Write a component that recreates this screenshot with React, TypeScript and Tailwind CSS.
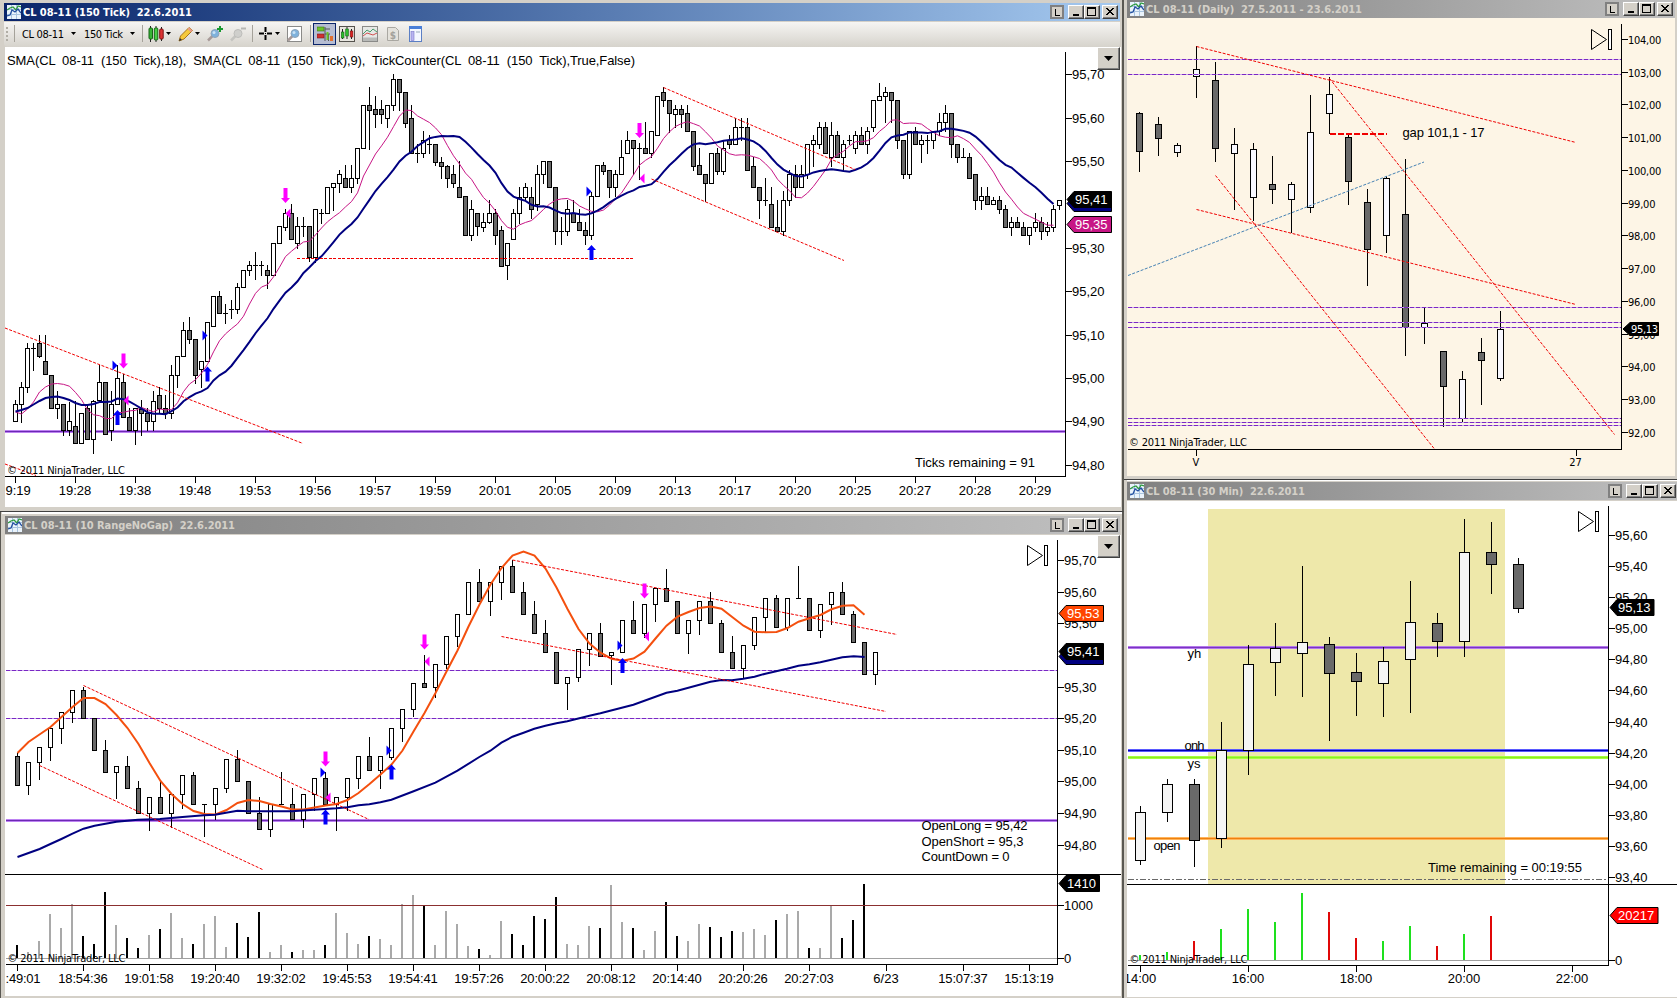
import type { ReactNode } from "react";

// [high, open, close, low] in chart pixels, y grows downwards
type Bar = [number, number, number, number];
type Line = [number, number, number, number];
type Dir = "up" | "down" | "left" | "right";
type Mark = [Dir, number, number];

const ARIAL = "'Liberation Sans', Arial, sans-serif";
const TAHOMA = "'DejaVu Sans Condensed', 'DejaVu Sans', Tahoma, sans-serif";
const DARK = "#696969";

const tickBars: Bar[] = [
  [400, 421, 404, 421], [382, 404, 387, 422], [343, 387, 348, 392], [343, 348, 348, 370], [335, 343, 356, 357],
  [335, 361, 374, 374], [375, 375, 408, 408], [391, 408, 404, 418], [404, 404, 430, 435], [402, 430, 421, 435],
  [401, 426, 443, 443], [413, 443, 413, 443], [405, 408, 439, 439], [400, 439, 401, 453], [365, 400, 382, 400],
  [382, 382, 434, 434], [391, 430, 404, 440], [365, 404, 378, 404], [374, 382, 417, 417], [408, 417, 430, 430],
  [408, 430, 408, 444], [400, 409, 413, 435], [408, 413, 421, 430], [391, 421, 401, 430], [387, 395, 408, 413],
  [395, 408, 413, 418], [365, 413, 375, 418], [356, 375, 356, 387], [322, 356, 330, 356], [317, 330, 339, 343],
  [339, 339, 375, 383], [361, 369, 361, 387], [322, 361, 322, 361], [296, 326, 296, 326], [291, 296, 313, 313],
  [304, 313, 313, 323], [300, 309, 309, 318], [283, 309, 287, 313], [270, 287, 270, 287], [261, 270, 265, 275],
  [252, 265, 265, 279], [261, 265, 265, 275], [265, 270, 275, 288], [243, 275, 243, 275], [226, 243, 226, 243],
  [209, 227, 213, 230], [204, 213, 239, 239], [217, 243, 226, 248], [217, 226, 226, 236], [226, 226, 257, 261],
  [209, 257, 209, 262], [209, 213, 213, 223], [187, 213, 187, 213], [183, 187, 183, 210], [170, 183, 174, 192],
  [165, 178, 187, 187], [165, 187, 178, 192], [148, 178, 148, 183], [105, 148, 105, 148], [87, 105, 110, 149],
  [96, 109, 114, 127], [100, 109, 114, 123], [105, 118, 105, 127], [74, 105, 79, 110], [79, 79, 92, 110],
  [92, 92, 123, 127], [105, 118, 153, 153], [144, 153, 153, 162], [131, 153, 140, 157], [135, 144, 144, 153],
  [144, 144, 162, 165], [157, 162, 166, 178], [165, 166, 178, 187], [165, 174, 183, 187], [161, 187, 197, 197],
  [196, 196, 235, 235], [200, 235, 209, 240], [213, 213, 226, 235], [213, 227, 222, 231], [200, 222, 213, 223],
  [209, 213, 235, 244], [226, 230, 266, 266], [243, 265, 243, 279], [209, 239, 213, 239], [187, 213, 197, 223],
  [183, 197, 187, 200], [187, 197, 209, 218], [165, 204, 174, 210], [161, 174, 161, 183], [161, 161, 187, 187],
  [187, 187, 231, 244], [217, 231, 231, 244], [200, 231, 209, 235], [200, 213, 222, 222], [209, 222, 230, 230],
  [222, 230, 235, 244], [192, 235, 196, 239], [165, 196, 165, 196], [162, 165, 171, 174], [170, 170, 187, 197],
  [170, 187, 174, 196], [140, 174, 157, 174], [131, 153, 140, 153], [140, 140, 148, 174], [143, 148, 148, 179],
  [122, 148, 153, 153], [131, 153, 131, 157], [96, 135, 96, 135], [87, 92, 100, 106], [100, 100, 113, 132],
  [105, 114, 109, 127], [105, 109, 114, 127], [105, 113, 131, 131], [131, 131, 166, 170], [148, 165, 174, 174],
  [174, 174, 183, 201], [153, 183, 153, 183], [148, 153, 171, 174], [140, 171, 148, 174], [135, 140, 144, 148],
  [118, 144, 127, 144], [118, 127, 127, 140], [118, 127, 170, 170], [157, 166, 187, 187], [187, 187, 200, 218],
  [178, 200, 200, 205], [187, 204, 227, 227], [200, 227, 231, 231], [191, 231, 200, 235], [170, 200, 174, 205],
  [165, 174, 187, 197], [165, 187, 174, 187], [144, 174, 144, 178], [135, 144, 140, 166], [122, 144, 127, 148],
  [122, 127, 153, 153], [122, 157, 135, 166], [131, 135, 157, 157], [140, 157, 144, 170], [135, 140, 140, 144],
  [131, 148, 135, 153], [127, 135, 144, 144], [127, 144, 131, 153], [100, 127, 100, 131], [83, 100, 96, 100],
  [87, 96, 92, 122], [92, 92, 100, 122], [100, 100, 140, 148], [140, 140, 174, 178], [131, 174, 131, 178],
  [127, 131, 144, 144], [135, 144, 140, 162], [135, 140, 140, 153], [131, 140, 131, 148], [113, 131, 122, 135],
  [105, 122, 113, 131], [113, 113, 144, 157], [144, 144, 157, 162], [148, 157, 157, 157], [153, 157, 178, 178],
  [174, 174, 200, 209], [187, 200, 196, 209], [187, 196, 204, 204], [197, 204, 200, 204], [196, 200, 209, 213],
  [205, 209, 227, 227], [217, 227, 222, 235], [217, 222, 227, 227], [222, 227, 235, 235], [227, 235, 227, 244],
  [213, 227, 222, 231], [217, 222, 231, 239], [222, 231, 227, 235], [205, 227, 209, 231], [200, 205, 200, 209],
];

const rangeBars: Bar[] = [
  [753, 756, 785, 785], [762, 785, 762, 794], [747, 762, 747, 779], [728, 747, 728, 760], [712, 728, 712, 743],
  [690, 712, 690, 722], [687, 690, 718, 718], [718, 718, 750, 750], [740, 750, 772, 772], [766, 772, 766, 798],
  [756, 766, 788, 788], [781, 788, 813, 813], [797, 813, 797, 830], [781, 797, 813, 813], [794, 813, 794, 827],
  [775, 794, 775, 808], [772, 775, 804, 804], [804, 804, 804, 836], [788, 804, 788, 819], [759, 788, 759, 792],
  [750, 759, 781, 781], [781, 781, 813, 813], [797, 813, 829, 829], [804, 829, 804, 836], [772, 804, 804, 804],
  [788, 804, 819, 819], [794, 819, 794, 827], [778, 794, 778, 810], [772, 778, 804, 804], [797, 804, 797, 830],
  [778, 797, 778, 810], [756, 778, 756, 788], [737, 756, 770, 770], [756, 770, 756, 788], [728, 757, 728, 759],
  [709, 728, 709, 741], [683, 709, 683, 716], [655, 683, 687, 687], [664, 687, 664, 697], [636, 664, 636, 668],
  [614, 636, 614, 646], [582, 614, 582, 614], [569, 582, 601, 601], [582, 601, 582, 615], [566, 582, 566, 599],
  [560, 566, 592, 592], [582, 592, 614, 614], [601, 614, 633, 633], [620, 633, 652, 652], [652, 652, 683, 683],
  [677, 683, 677, 709], [649, 677, 649, 681], [633, 649, 633, 665], [623, 633, 656, 656], [652, 655, 652, 684],
  [620, 652, 620, 652], [601, 620, 633, 633], [604, 633, 604, 637], [588, 604, 588, 621], [569, 588, 601, 601],
  [601, 601, 633, 633], [620, 633, 620, 653], [601, 620, 601, 634], [592, 601, 623, 623], [620, 623, 652, 652],
  [636, 652, 668, 668], [645, 668, 645, 678], [617, 645, 617, 649], [598, 617, 598, 631], [595, 598, 627, 627],
  [598, 627, 598, 630], [566, 598, 598, 598], [598, 598, 630, 630], [604, 630, 604, 637], [592, 604, 592, 624],
  [582, 592, 614, 614], [611, 614, 642, 642], [642, 642, 674, 674], [652, 674, 652, 684],
];

const dailyBars: Bar[] = [
  [112, 113, 151, 171], [117, 124, 138, 155], [143, 152, 145, 156], [46, 76, 69, 97], [62, 80, 148, 161],
  [128, 153, 144, 209], [143, 197, 149, 220], [156, 184, 189, 203], [182, 199, 184, 232], [95, 207, 132, 212],
  [77, 113, 94, 133], [135, 137, 181, 204], [189, 202, 249, 285], [176, 235, 178, 252], [159, 214, 327, 355],
  [307, 327, 323, 343], [351, 351, 386, 426], [371, 418, 379, 422], [338, 352, 360, 404], [311, 378, 329, 380],
];

const halfHourBars: Bar[] = [
  [806, 860, 812, 864], [779, 812, 784, 821], [779, 784, 840, 866], [722, 838, 750, 847], [645, 750, 664, 774],
  [623, 662, 648, 695], [566, 653, 642, 696], [637, 644, 673, 740], [653, 672, 681, 715], [647, 683, 661, 716],
  [581, 659, 622, 712], [613, 623, 641, 656], [519, 641, 552, 656], [522, 552, 564, 593], [558, 564, 608, 612],
];

const envelope = [
  753, 742, 734.5, 727, 717, 707, 698, 698, 704, 715, 728, 744, 763, 781, 794, 804, 811, 814, 814.5, 810, 803, 800,
  801, 804, 806.5, 809.5, 809.5, 807.5, 805.5, 804, 800, 793, 784, 774.5, 764.5, 750.5, 731.5, 713, 693, 671.5, 650.5,
  626.5, 604.5, 584.5, 568, 555.5, 551.5, 555.5, 568.5, 587.5, 609, 629, 643.5, 652.7, 658.7, 660.7, 658.5, 651.7,
  638.5, 625.7, 616.7, 612, 608, 606.5, 608.7, 617.3, 625.7, 631.7, 632.3, 632, 628, 621.7, 618.3, 615, 609.3, 605.7,
  605.3, 614.7,
];

const slowAverage =
  "17.5,857 39.6,849 50.4,844 61.4,839 72.5,833.7 83.6,828.7 94.6,825.7 116.4,821.7 138,819.7 160,819 182.5,817 204,815.3 215,814.7 226,812.7 237.5,810.7 248.5,811.3 292,811.3 314,809.7 336.4,808.3 347.5,807.3 358.5,805.3 369.3,804.3 380.4,802.3 391.4,799.7 413.6,791.3 435.4,782.7 457.5,770.7 479.3,757 490.4,750.7 501.4,742.7 512.5,736.7 523.6,732.7 534.3,728.7 545.4,725.7 556.4,723.3 567.3,721.3 589.4,715.7 600.4,713.3 633.4,704.7 666.5,692.7 677.4,690.7 710.5,681.7 721.4,680 732,680.3 743.2,678.7 754.5,676.7 765.4,673.7 787,668.7 798.5,665.7 809.4,664.3 820.3,662.3 842.4,657.3 853.7,656.3 864.6,657";

// negative = black bar, positive = grey bar
const volume = [
  -945, 952, 941, 914, 928, 904, -936, -944, -892, 925, -938, -948, 935, -929, 913, 938, -944, 924, 916, 947, -923,
  -937, -912, 952, 945, -952, 950, 950, -945, 913, 933, 944, -936, 939, 945, 904, 895, -905, 945, 911, 924, 946, -949,
  955, 921, -934, -945, -916, -919, -897, 944, 945, 926, -928, 885, 922, -928, 950, 931, -902, -936, 941, 924, -927,
  -937, -931, 932, 929, 935, -920, 914, 911, -948, 948, 905, -938, -920, -884,
];
const halfHourVolume = [955, 952, -941, 929, 909, 922, 893, -912, -938, 941, 926, -946, 934, -916];

const seed18 = [411.5, 410, 408, 404.5, 401, 398, 397, 396.5, 398, 400, 403, 405, 405, 404, 402, 402, 401.5];
const seed9 = [412, 414, 409, 402, 392, 387, 384, 383.5];

function sma(bars: Bar[], period: number, seed: number[]) {
  return bars.map((_, i) => {
    if (i < seed.length) return seed[i];
    let sum = 0;
    for (let k = i - period + 1; k <= i; k++) sum += bars[k][2];
    return sum / period;
  });
}

const toPoints = (ys: number[], x0: number, step: number) => ys.map((y, i) => `${x0 + i * step},${y}`).join(" ");

function Candles({ bars, x0, step, half, fill = "#fff" }: { bars: Bar[]; x0: number; step: number; half: number; fill?: string }) {
  return (
    <g shapeRendering="crispEdges" stroke="#000">
      {bars.map(([h, o, c, l], i) => {
        const x = x0 + i * step;
        const top = Math.min(o, c);
        const bottom = Math.max(o, c);
        return (
          <g key={i}>
            <line x1={x} x2={x} y1={h} y2={l + 1} />
            {o === c ? (
              <line x1={x - half - 0.5} x2={x + half + 0.5} y1={o + 0.5} y2={o + 0.5} />
            ) : (
              <rect x={x - half} y={top + 0.5} width={half * 2} height={bottom - top} fill={c > o ? DARK : fill} />
            )}
          </g>
        );
      })}
    </g>
  );
}

function Dashes({ lines, color = "#f00000", dash = "3 1.5", width = 1 }: { lines: Line[]; color?: string; dash?: string; width?: number }) {
  return (
    <g stroke={color} strokeDasharray={dash} strokeWidth={width}>
      {lines.map(([x1, y1, x2, y2], i) => (
        <line key={i} x1={x1} y1={y1} x2={x2} y2={y2} shapeRendering={y1 === y2 ? "crispEdges" : "auto"} />
      ))}
    </g>
  );
}

function Levels({ ys, x1, x2 }: { ys: number[]; x1: number; x2: number }) {
  return (
    <g shapeRendering="crispEdges">
      {ys.map((y) => (
        <g key={y}>
          <line x1={x1} x2={x2} y1={y} y2={y} stroke="#c9a4ee" />
          <line x1={x1} x2={x2} y1={y} y2={y} stroke="#7a28c4" strokeDasharray="4 2" />
        </g>
      ))}
    </g>
  );
}

function ThickLevel({ y, x1, x2, outer, inner }: { y: number; x1: number; x2: number; outer: string; inner: string }) {
  return (
    <g shapeRendering="crispEdges">
      <line x1={x1} x2={x2} y1={y} y2={y} stroke={outer} strokeWidth={3} />
      <line x1={x1} x2={x2} y1={y} y2={y} stroke={inner} />
    </g>
  );
}

// up/down arrows take their top edge as y, the small triangles their middle
function Marks({ marks }: { marks: Mark[] }) {
  return (
    <g>
      {marks.map(([dir, x, y], i) => {
        if (dir === "up") return <path key={i} fill="#0000f8" d={`M${x} ${y}l4.5 5h-2.5v10h-4v-10h-2.5z`} />;
        if (dir === "down") return <path key={i} fill="#ff00ff" d={`M${x} ${y + 15}l4.5-5h-2.5v-10h-4v10h-2.5z`} />;
        if (dir === "right") return <path key={i} fill="#0000f8" d={`M${x} ${y}l-5-5v10z`} />;
        return <path key={i} fill="#ff00ff" d={`M${x} ${y}l5-5v10z`} />;
      })}
    </g>
  );
}

function Label({ x, y, children, width, size = 13, font = ARIAL, anchor = "start", fill = "#000" }: {
  x: number; y: number; children: ReactNode; width?: number; size?: number; font?: string; anchor?: "start" | "middle"; fill?: string;
}) {
  return (
    <text x={x} y={y} fontSize={size} fontFamily={font} textAnchor={anchor} fill={fill} textLength={width} className="whitespace-pre">
      {children}
    </text>
  );
}

function PriceAxis({ x, ticks, font = ARIAL, size = 13 }: { x: number; ticks: [string, number][]; font?: string; size?: number }) {
  return (
    <g>
      {ticks.map(([label, y]) => (
        <g key={label}>
          <line x1={x} x2={x + 6} y1={y} y2={y} stroke="#000" shapeRendering="crispEdges" />
          <Label x={x + 6} y={y + (size > 12 ? 4.5 : 4)} font={font} size={size} width={font === TAHOMA ? label.length * 5.7 - 1 : undefined}>
            {label}
          </Label>
        </g>
      ))}
    </g>
  );
}

function TimeAxis({ y, baseline, ticks, font = ARIAL, size = 13, width }: {
  y: number; baseline: number; ticks: [string, number][]; font?: string; size?: number; width?: number;
}) {
  return (
    <g>
      {ticks.map(([label, x]) => (
        <g key={x}>
          <line x1={x} x2={x} y1={y} y2={y + 6} stroke="#000" shapeRendering="crispEdges" />
          {label && (
            <Label x={x - 0.5} y={baseline} anchor="middle" font={font} size={size} width={label.length > 5 ? width : undefined}>
              {label}
            </Label>
          )}
        </g>
      ))}
    </g>
  );
}

function Tag({ x, y, w, h = 16, fill, text, size = 13, font = ARIAL }: {
  x: number; y: number; w: number; h?: number; fill: string; text?: string; size?: number; font?: string;
}) {
  return (
    <g>
      <path d={`M${x} ${y + h / 2}l7-${h / 2}h${w - 7}v${h}h-${w - 7}z`} fill={fill} stroke="#000" />
      {text && (
        <Label x={x + 8} y={y + h / 2 + (size > 12 ? 4.5 : 4)} fill="#fff" size={size} font={font} width={size > 12 ? undefined : 27}>
          {text}
        </Label>
      )}
    </g>
  );
}

function SkipIcon({ x, y }: { x: number; y: number }) {
  return (
    <g fill="none" stroke="#000">
      <path d={`M${x} ${y}l15 10l-15 10z`} />
      <rect x={x + 17} y={y} width="3" height="20" fill="#fff" shapeRendering="crispEdges" />
    </g>
  );
}

function Copyright({ x, y }: { x: number; y: number }) {
  return (
    <Label x={x} y={y} size={11} font={TAHOMA} width={118}>
      © 2011 NinjaTrader, LLC
    </Label>
  );
}

function ChartIcon() {
  return (
    <svg width="14" height="14" viewBox="0 0 14 14" className="shrink-0">
      <rect width="14" height="14" fill="#eaf3fb" />
      <path d="M0 4.5h14M0 9.5h14M4.5 0v14M9.5 0v14" stroke="#a9c4e0" />
      <path d="M0 5l3-2 3-1 3 3 2-4 3 1" fill="none" stroke="#2c9a3c" strokeWidth="1.3" />
      <path d="M0 11l3-1 2-5 3 2 3-3 3 4" fill="none" stroke="#234fa0" strokeWidth="1.3" />
    </svg>
  );
}

function BevelButton({ children, className }: { children: ReactNode; className?: string }) {
  return (
    <div className={`box-border h-[14px] w-4 border border-t-white border-r-[#404040] border-b-[#404040] border-l-white bg-[#d4d0c8] shadow-[inset_-1px_-1px_0_#808080] ${className ?? ""}`}>
      <svg width="14" height="12" viewBox="0 0 14 12" shapeRendering="crispEdges">{children}</svg>
    </div>
  );
}

function TitleBar({ title, active, width, className }: { title: string; active?: boolean; width: number; className: string }) {
  return (
    <div className={`flex shrink-0 items-center ${active ? "bg-linear-to-r from-[#0a246a] to-[#a6caf0]" : "bg-linear-to-r from-[#808080] to-[#c0c0c0]"} ${className}`}>
      <ChartIcon />
      <svg width={width + 4} height="16" className="ml-[2px]">
        <text x="0" y="12" fontSize="11" fontWeight="bold" fontFamily={TAHOMA} textLength={width} fill={active ? "#fff" : "#d4d0c8"} className="whitespace-pre">
          {title}
        </text>
      </svg>
      <div className="ml-auto flex">
        <div className="mr-1 flex h-[14px] w-[14px] items-end justify-center border-2 border-[#808080] bg-[#d4d0c8]">
          <svg width="5" height="8" shapeRendering="crispEdges"><path d="M.5 0v6.5H5" stroke="#000" fill="none" /></svg>
        </div>
        <BevelButton><path d="M4 9h6" stroke="#000" strokeWidth="2" /></BevelButton>
        <BevelButton><path d="M2.500 1.500h8v8h-8zM2 2.500h9" stroke="#000" fill="none" /></BevelButton>
        <BevelButton className="ml-[2px]">
          <path d="M3 2l7 7M4 2l7 7M10 2l-7 7M11 2l-7 7" stroke="#000" shapeRendering="auto" />
        </BevelButton>
      </div>
    </div>
  );
}

function DropButton() {
  return (
    <div className="absolute top-0 right-px flex h-[23px] w-[23px] items-center justify-center border border-t-white border-r-[#404040] border-b-[#404040] border-l-white bg-[#d4d0c8] shadow-[inset_-1px_-1px_0_#808080]">
      <svg width="9" height="5"><path d="M0 0h9l-4.500 5z" /></svg>
    </div>
  );
}

function Caret({ className }: { className: string }) {
  return (
    <svg width="5" height="3" className={`shrink-0 ${className}`}><path d="M0 0h5l-2.500 3z" /></svg>
  );
}

function Separator({ className }: { className: string }) {
  return <div className={`h-[17px] w-px shrink-0 bg-[#a5a29a] ${className}`} />;
}

function Glyph({ children, className }: { children: ReactNode; className: string }) {
  return (
    <svg width="16" height="16" viewBox="0 0 16 16" className={`shrink-0 ${className}`}>{children}</svg>
  );
}

function ToolText({ text, width, className }: { text: string; width: number; className: string }) {
  return (
    <svg width={width + 1} height="16" className={`shrink-0 ${className}`}>
      <text x="0" y="12" fontSize="11" fontFamily={TAHOMA} textLength={width}>{text}</text>
    </svg>
  );
}

function Lens({ grey }: { grey?: boolean }) {
  return (
    <>
      <path d="M5.500 10L1 14.500" stroke={grey ? "#c4c4c0" : "#a89a98"} strokeWidth="2.500" />
      <circle cx="8" cy="7.500" r="4" fill={grey ? "#cfcfcc" : "#7fb2dc"} stroke={grey ? "#bdbdba" : "#8fa4b8"} />
      {!grey && <circle cx="7" cy="6.500" r="1.500" fill="#c9e2f5" />}
    </>
  );
}

function Toolbar() {
  return (
    <div className="flex h-[25px] shrink-0 items-center rounded-b-sm bg-linear-to-b from-[#f6f5f3] to-[#d6d3cc] pb-[2px]">
      <div className="ml-[2px] flex w-[2px] shrink-0 flex-col gap-[2px]">
        {[0, 1, 2, 3].map((i) => <div key={i} className="h-[2px] w-[2px] bg-[#b0ada5]" />)}
      </div>
      <Separator className="ml-[6px]" />
      <ToolText text="CL 08-11" width={42} className="ml-[7px]" />
      <Caret className="ml-[6px]" />
      <ToolText text="150 Tick" width={39} className="ml-[8px]" />
      <Caret className="ml-[6px]" />
      <Separator className="ml-[7px]" />
      <Glyph className="ml-[5px]">
        <path d="M2.500 0v16M8 0v16M13.500 1v14" stroke="#222" />
        <rect x="1" y="2" width="3.500" height="11" rx="1" fill="#35b535" stroke="#176217" />
        <rect x="6.300" y="2" width="3.500" height="12" rx="1" fill="#45cf45" stroke="#176217" />
        <rect x="11.700" y="3" width="3.500" height="10" rx="1" fill="#d33" stroke="#7a1515" />
      </Glyph>
      <Caret className="ml-[2px]" />
      <Glyph className="ml-[7px]">
        <path d="M1 15l1.500-5L11 1.500l3.500 3L6 13z" fill="#f5c93c" stroke="#a8751c" />
        <path d="M9.500 3l3.500 3.300 1.500-1.800L11 1.500z" fill="#e89a8c" />
        <path d="M1 15l1-3 2 2z" fill="#333" />
      </Glyph>
      <Caret className="ml-[1px]" />
      <Glyph className="ml-[7px]">
        <Lens />
        <path d="M13 0v6M10 3h6" stroke="#189a30" strokeWidth="2" />
      </Glyph>
      <Glyph className="ml-[7px]">
        <Lens grey />
        <path d="M11 2.500h5" stroke="#b8b8b4" strokeWidth="2" />
      </Glyph>
      <Separator className="ml-[6px]" />
      <Glyph className="ml-[5px]">
        <path d="M7.500 1v5M7.500 9v5M1 7.500h5M9 7.500h5" stroke="#000" strokeWidth="2" />
        <rect x="7" y="7" width="1" height="1" />
      </Glyph>
      <Caret className="ml-[1px]" />
      <Glyph className="ml-[7px]">
        <rect x=".5" y=".5" width="14" height="15" fill="#fff" stroke="#8a8a88" />
        <Lens />
      </Glyph>
      <Separator className="ml-[7px]" />
      <div className="ml-[2px] flex h-[22px] w-[23px] shrink-0 items-center justify-center border border-[#0a246a] bg-[#b6bdd2]">
        <Glyph className="">
          <path d="M8 1v14M8 3h5M8 8h5M11.500 8v7" stroke="#555" fill="none" />
          <rect x="0" y="1" width="7" height="4" fill="#6bc42a" stroke="#3f7a14" strokeWidth=".6" />
          <rect x="0" y="8" width="7" height="4" fill="#d03030" stroke="#801818" strokeWidth=".6" />
          <rect x="9.500" y="6" width="2" height="8" fill="#6bc42a" />
          <rect x="13" y="10" width="3" height="5" fill="#e07030" />
        </Glyph>
      </div>
      <Glyph className="ml-[3px]">
        <rect x=".5" y=".5" width="15" height="15" fill="#e8e6e0" stroke="#55534e" />
        <path d="M3.500 3v10M8 1v12M12.500 3v10" stroke="#222" />
        <rect x="2.300" y="6" width="2.700" height="6" fill="#2ebd2e" stroke="#176217" strokeWidth=".6" />
        <rect x="6.700" y="3" width="2.700" height="7" fill="#2ebd2e" stroke="#176217" strokeWidth=".6" />
        <rect x="11.200" y="5" width="2.700" height="6" fill="#d22" stroke="#7a1515" strokeWidth=".6" />
      </Glyph>
      <Glyph className="ml-[7px]">
        <rect x=".5" y=".5" width="15" height="15" fill="#e6e8e6" stroke="#8a8a88" />
        <path d="M1 8l4-4 3 2 3-3 4 3" fill="none" stroke="#4a9a6a" />
        <path d="M1 10l4-3 3 1 3 1 4-2" fill="none" stroke="#d05050" />
        <path d="M1 11.500h14v3.500H1z" fill="#b8bab8" />
      </Glyph>
      <Glyph className="ml-[7px]">
        <path d="M2.500 1.500h8l3 3v10h-11z" fill="#e4e2dc" stroke="#aaa8a2" />
        <text x="8" y="12.500" fontSize="10" fontWeight="bold" fill="#a3a19b" textAnchor="middle" fontFamily={TAHOMA}>$</text>
      </Glyph>
      <Glyph className="ml-[7px]">
        <rect x="1.500" y=".5" width="12" height="15" fill="#f4f7ff" stroke="#5b7fc4" />
        <rect x="1" y="0" width="13" height="3" fill="#4a7fd8" />
        <rect x="3" y="5.500" width="3" height="9" fill="#b9b4f0" stroke="#7a78c8" strokeWidth=".6" />
        <path d="M8 6h4" stroke="#9ab" />
      </Glyph>
    </div>
  );
}

function TickChart() {
  const times = "19:19 19:28 19:38 19:48 19:53 19:56 19:57 19:59 20:01 20:05 20:09 20:13 20:17 20:20 20:25 20:27 20:28 20:29"
    .split(" ")
    .map((t, i): [string, number] => [i === 0 ? "" : t, 15.5 + i * 60]);
  return (
    <svg width="1116" height="460" viewBox="5 47 1116 460" className="block">
      <ThickLevel y={431.5} x1={5} x2={1065} outer="#bd82f2" inner="#6c28b4" />
      <Candles bars={tickBars} x0={15.5} step={6} half={2} />
      <polyline points={toPoints(sma(tickBars, 9, seed9).slice(0, 174), 15.5, 6)} fill="none" stroke="#c71585" />
      <polyline points={toPoints(sma(tickBars, 18, seed18).slice(0, 174), 15.5, 6)} fill="none" stroke="#000080" strokeWidth="2" />
      <Dashes
        lines={[
          [5, 328, 303, 443.5], [5, 464, 36, 475.5], [297, 258.5, 633, 258.5], [663.5, 87.5, 855, 169.5], [651.5, 179, 844, 260.5],
        ]}
      />
      <Marks
        marks={[
          ["down", 285.5, 188], ["down", 123.5, 353.5], ["down", 639.5, 123], ["up", 207.5, 366.5], ["up", 117.5, 410],
          ["up", 591.5, 245], ["right", 207.5, 335.5], ["right", 117.5, 365.5], ["right", 591.5, 191.5],
          ["left", 123.5, 400.5], ["left", 285.5, 213.5], ["left", 639.5, 178.5],
        ]}
      />
      <path d="M1065.5 52v424.500M5 476.500h1061" stroke="#000" shapeRendering="crispEdges" />
      <PriceAxis
        x={1066}
        ticks={[
          ["95,70", 74.5], ["95,60", 118.5], ["95,50", 161.5], ["95,30", 248.5], ["95,20", 291.5], ["95,10", 335.5],
          ["95,00", 378.5], ["94,90", 421.5], ["94,80", 465.5],
        ]}
      />
      <Label x={5.5} y={495}>9:19</Label>
      <TimeAxis y={477} baseline={495} ticks={times} />
      <Tag x={1067} y={195.500} w={44.5} fill="#000080" />
      <Tag x={1067} y={191.500} w={44.5} fill="#000" text="95,41" />
      <Tag x={1067} y={216.500} w={44.5} fill="#c71585" text="95,35" />
      <Label x={7} y={65} width={628}>
        SMA(CL  08-11  (150  Tick),18),  SMA(CL  08-11  (150  Tick),9),  TickCounter(CL  08-11  (150  Tick),True,False)
      </Label>
      <Label x={915} y={467} width={120}>Ticks remaining = 91</Label>
      <Copyright x={7} y={474} />
    </svg>
  );
}

function RangeChart() {
  const times = "18:49:01 18:54:36 19:01:58 19:20:40 19:32:02 19:45:53 19:54:41 19:57:26 20:00:22 20:08:12 20:14:40 20:20:26 20:27:03"
    .split(" ")
    .map((t, i): [string, number] => [i === 0 ? "" : t, 17.5 + i * 66]);
  return (
    <svg width="1116" height="461" viewBox="5 535 1116 461" className="block">
      <Levels ys={[670.5, 718.5]} x1={6} x2={1057} />
      <ThickLevel y={820.5} x1={6} x2={1057} outer="#bd82f2" inner="#6c28b4" />
      <Candles bars={rangeBars} x0={17.5} step={11} half={2} />
      <polyline points={toPoints(envelope, 17.5, 11)} fill="none" stroke="#f4500f" strokeWidth="2" />
      <polyline points={slowAverage} fill="none" stroke="#000080" strokeWidth="2" />
      <Dashes
        lines={[
          [83.5, 685.5, 369, 819.5], [39.5, 765.5, 262.5, 869.5], [512.5, 560, 897, 634.5], [501.5, 636.5, 886, 711.5],
        ]}
      />
      <Marks
        marks={[
          ["down", 424.5, 634.5], ["down", 325.5, 751.5], ["down", 644.5, 583.5], ["up", 325.5, 809.5], ["up", 391.5, 764.5],
          ["up", 622.5, 658], ["right", 325.5, 772.5], ["right", 391.5, 750.5], ["right", 622.5, 645.5],
          ["left", 424.5, 661.5], ["left", 325.5, 797.5], ["left", 644, 636.5],
        ]}
      />
      <g shapeRendering="crispEdges">
        {volume.map((v, i) => (
          <rect key={i} x={16 + i * 11} y={Math.abs(v)} width="2" height={958 - Math.abs(v)} fill={v < 0 ? "#000" : "#a9a9a9"} />
        ))}
        <path d="M6 958.500h1051" stroke="#a0a0a0" />
        <path d="M6 905.500h1051" stroke="#8b3030" />
        <path d="M1057.500 540v424.500H6M5 874.500h1116" stroke="#000" fill="none" />
      </g>
      <PriceAxis
        x={1058}
        ticks={[
          ["95,70", 560.5], ["95,60", 592.5], ["95,50", 623.5], ["95,30", 687.5], ["95,20", 718.5], ["95,10", 750.5],
          ["95,00", 781.5], ["94,90", 813.5], ["94,80", 845.5], ["1000", 905.5], ["0", 958.5],
        ]}
      />
      <Label x={5.5} y={983} width={35}>:49:01</Label>
      <TimeAxis y={965} baseline={983} width={49.5} ticks={[...times, ["6/23", 886.5], ["15:07:37", 963.5], ["15:13:19", 1029.5]]} />
      <Tag x={1059} y={605.500} w={44.5} fill="#ff4500" text="95,53" />
      <Tag x={1059} y={648.500} w={44.5} fill="#000080" />
      <Tag x={1059} y={643.500} w={44.5} fill="#000" text="95,41" />
      <Tag x={1059} y={875.500} w={40.5} fill="#000" text="1410" />
      <SkipIcon x={1027.5} y={545.5} />
      <Label x={921.5} y={830} width={106}>OpenLong = 95,42</Label>
      <Label x={921.5} y={846} width={102}>OpenShort = 95,3</Label>
      <Label x={921.5} y={861} width={88}>CountDown = 0</Label>
      <Copyright x={7.5} y={962} />
    </svg>
  );
}

function DailyChart() {
  return (
    <svg width="548" height="458" viewBox="1127 18 548 458" className="block">
      <Candles bars={dailyBars} x0={1139.5} step={19} half={3} fill="#f8f8ff" />
      <Levels ys={[59.5, 74.5, 307.5, 322.5, 327.5, 418.5, 422.5, 425.5]} x1={1128} x2={1621} />
      <Dashes
        lines={[
          [1196.5, 46.5, 1576, 142.5], [1329.5, 78.5, 1614.5, 434.5], [1215.5, 175.5, 1434.5, 449], [1196.5, 209.5, 1576, 304.5],
        ]}
      />
      <Dashes lines={[[1128, 275.5, 1424, 162]]} color="#4682b4" />
      <Dashes lines={[[1329.5, 134, 1387, 134]]} width={2} dash="6 2" />
      <path d="M1621.500 24v425.500M1128 449.500h494" stroke="#000" shapeRendering="crispEdges" />
      <PriceAxis
        x={1622}
        font={TAHOMA}
        size={11}
        ticks={[
          ["104,00", 39.5], ["103,00", 72.5], ["102,00", 104.5], ["101,00", 137.5], ["100,00", 170.5], ["99,00", 203.5],
          ["98,00", 235.5], ["97,00", 268.5], ["96,00", 301.5], ["95,00", 334.5], ["94,00", 366.5], ["93,00", 399.5], ["92,00", 432.5],
        ]}
      />
      <TimeAxis y={450} baseline={465.5} font={TAHOMA} size={11} ticks={[["V", 1196.5], ["27", 1576]]} />
      <Tag x={1623} y={322.500} w={35.5} h={13} fill="#000" text="95,13" size={11} font={TAHOMA} />
      <Label x={1402.5} y={137} width={82}>gap 101,1 - 17</Label>
      <SkipIcon x={1591.5} y={29.5} />
      <Copyright x={1129} y={446} />
    </svg>
  );
}

function HalfHourChart() {
  return (
    <svg width="550" height="496" viewBox="1127 501 550 496" className="block">
      <rect x="1208" y="509" width="297" height="375" fill="#eee8aa" />
      <line x1="1128" x2="1608" y1="879.5" y2="879.5" stroke="#696969" strokeDasharray="6 2 2 2" shapeRendering="crispEdges" />
      <ThickLevel y={647.5} x1={1128} x2={1608} outer="#b478ea" inner="#7a34c4" />
      <ThickLevel y={750.5} x1={1128} x2={1608} outer="#5a5aff" inner="#0000b4" />
      <ThickLevel y={757.5} x1={1128} x2={1608} outer="#a8ff40" inner="#8cec24" />
      <ThickLevel y={838.5} x1={1128} x2={1608} outer="#ffb45a" inner="#ee8010" />
      <Candles bars={halfHourBars} x0={1140.5} step={27} half={5} fill="#f5f5f5" />
      <g shapeRendering="crispEdges">
        {halfHourVolume.map((v, i) => (
          <rect key={i} x={1139 + i * 27} y={Math.abs(v)} width="2" height={960 - Math.abs(v)} fill={v < 0 ? "#e00808" : "#1ee01e"} />
        ))}
        <path d="M1128 960.500h480" stroke="#a0a0a0" />
        <path d="M1608.500 506v459.500H1128M1127 884.500h550" stroke="#000" fill="none" />
      </g>
      <PriceAxis
        x={1609}
        ticks={[
          ["95,60", 535.5], ["95,40", 566.5], ["95,20", 597.5], ["95,00", 628.5], ["94,80", 659.5], ["94,60", 690.5],
          ["94,40", 722.5], ["94,20", 753.5], ["94,00", 784.5], ["93,80", 815.5], ["93,60", 846.5], ["93,40", 877.5], ["0", 960.5],
        ]}
      />
      <TimeAxis
        y={966}
        baseline={983}
        ticks={[["14:00", 1140.5], ["16:00", 1248.5], ["18:00", 1356.5], ["20:00", 1464.5], ["22:00", 1572.5]]}
      />
      <Tag x={1610} y={599.500} w={44} fill="#000" text="95,13" />
      <Tag x={1610} y={907.500} w={48} fill="#ff0000" text="20217" />
      <SkipIcon x={1578.5} y={511.5} />
      <Label x={1187.5} y={657.5}>yh</Label>
      <Label x={1184.5} y={749.5} width={20}>onh</Label>
      <Label x={1187.5} y={767.5}>ys</Label>
      <Label x={1153.5} y={850} width={27}>open</Label>
      <Label x={1428} y={871.500} width={154}>Time remaining = 00:19:55</Label>
      <Copyright x={1129.5} y={963} />
    </svg>
  );
}

export default function App() {
  return (
    <div className="flex h-[998px] w-[1677px] overflow-hidden bg-[#d4d0c8]">
      <div className="flex w-[1124px] shrink-0 flex-col">
        <section className="flex h-[512px] flex-col border-r-2 border-b border-[#5a5852] border-b-[#404040] bg-[#d4d0c8] pt-[3px] pl-1">
          <TitleBar title="CL 08-11 (150 Tick)  22.6.2011" active width={169} className="mr-[2px] h-[18px] pr-[2px] pl-[3px]" />
          <div className="mt-px mr-[2px]">
            <Toolbar />
          </div>
          <div className="relative ml-px h-[460px] w-[1116px] bg-white">
            <TickChart />
            <DropButton />
          </div>
        </section>
        <section className="flex h-[486px] flex-col border-r-2 border-l border-[#5a5852] bg-[#d4d0c8]">
          <div className="mb-[2px] ml-px h-[2px] bg-white" />
          <TitleBar title="CL 08-11 (10 RangeNoGap)  22.6.2011" width={211} className="mr-[2px] ml-1 h-[18px] pr-[2px] pl-[3px]" />
          <div className="relative mt-px ml-1 h-[461px] w-[1116px] bg-white">
            <RangeChart />
            <DropButton />
          </div>
        </section>
      </div>
      <div className="flex w-[553px] flex-col">
        <section className="flex h-[480px] flex-col border-b border-[#404040] pl-[3px]">
          <TitleBar title="CL 08-11 (Daily)  27.5.2011 - 23.6.2011" width={216} className="mr-[2px] h-[18px] pr-[2px] pl-[3px]" />
          <div className="h-[458px] w-[548px] bg-[#fdf5e6]">
            <DailyChart />
          </div>
        </section>
        <section className="flex h-[518px] flex-col pl-[3px]">
          <div className="mb-px h-px bg-white" />
          <TitleBar title="CL 08-11 (30 Min)  22.6.2011" width={159} className="h-[18px] pr-px pl-[3px]" />
          <div className="mt-px h-[496px] w-[550px] bg-white">
            <HalfHourChart />
          </div>
        </section>
      </div>
    </div>
  );
}
